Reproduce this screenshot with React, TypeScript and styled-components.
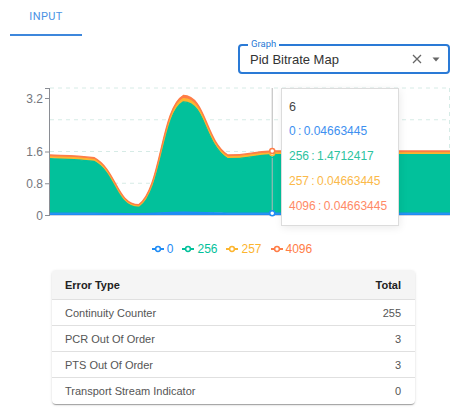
import styled, { createGlobalStyle } from 'styled-components';

const GlobalStyle = createGlobalStyle`
    body {
        margin: 0;
        background: #ffffff;
        font-family: "Liberation Sans", Arial, sans-serif;
    }
`;

type Series = { name: string; color: string; values: number[] };

const SERIES: Series[] = [
    { name: '0', color: '#1f8cf5', values: [0.047, 0.047, 0.03, 0.07, 0.047, 0.047, 0.047, 0.047, 0.047, 0.047] },
    { name: '256', color: '#02c19b', values: [1.37, 1.30, 0.17, 2.78, 1.37, 1.471, 1.47, 1.47, 1.47, 1.47] },
    { name: '257', color: '#fcb52f', values: [0.047, 0.047, 0.03, 0.08, 0.047, 0.047, 0.047, 0.047, 0.047, 0.047] },
    { name: '4096', color: '#ff7d47', values: [0.047, 0.047, 0.03, 0.08, 0.047, 0.047, 0.047, 0.047, 0.047, 0.047] },
];

const TOOLTIP = [
    { label: '0 : 0.04663445', color: '#3d8ff0' },
    { label: '256 : 1.4712417', color: '#2cc3a0' },
    { label: '257 : 0.04663445', color: '#fbb949' },
    { label: '4096 : 0.04663445', color: '#ff8a66' },
];

const ERRORS = [
    { type: 'Continuity Counter', total: 255 },
    { type: 'PCR Out Of Order', total: 3 },
    { type: 'PTS Out Of Order', total: 3 },
    { type: 'Transport Stream Indicator', total: 0 },
];

const X0 = 50;
const X1 = 450;
const BASE = 135;
const UNIT = 127 / 3.2;
const POINTER = 5;

const xAt = (i: number) => X0 + (i * (X1 - X0)) / 9;
const yAt = (v: number) => BASE - v * UNIT;

type Pt = [number, number];

const clamp = (v: number, a: number, b: number) => Math.min(Math.max(v, Math.min(a, b)), Math.max(a, b));

// echarts-like smoothed polyline, control points kept inside neighbour range
const smooth = (pts: Pt[], start: 'M' | 'L') => {
    const k = 0.25;
    const cps = pts.map((p, i) => {
        const prev = pts[i - 1] ?? p;
        const next = pts[i + 1] ?? p;
        const vx = next[0] - prev[0];
        const vy = next[1] - prev[1];
        const c0: Pt = [p[0] - vx * k, clamp(p[1] - vy * k, prev[1], p[1])];
        const c1: Pt = [p[0] + vx * k, clamp(p[1] + vy * k, p[1], next[1])];
        return [c0, c1];
    });
    let d = `${start}${pts[0][0].toFixed(2)},${pts[0][1].toFixed(2)}`;
    for (let i = 1; i < pts.length; i++) {
        const a = cps[i - 1][1];
        const b = cps[i][0];
        d += ` C${a[0].toFixed(2)},${a[1].toFixed(2)} ${b[0].toFixed(2)},${b[1].toFixed(2)} ${pts[i][0].toFixed(2)},${pts[i][1].toFixed(2)}`;
    }
    return d;
};

const stacks = (() => {
    const acc = new Array(10).fill(0);
    return SERIES.map((s) => {
        const bottom: Pt[] = acc.map((v, i) => [xAt(i), yAt(v)]);
        s.values.forEach((v, i) => (acc[i] += v));
        const top: Pt[] = acc.map((v, i) => [xAt(i), yAt(v)]);
        return { ...s, top, bottom };
    });
})();

const Page = styled.div`
    width: 462px;
    height: 417px;
    overflow: hidden;
    display: flex;
    flex-direction: column;
`;

const TabBar = styled.div`
    display: flex;
    height: 36px;
    padding-left: 10px;
`;

const Tab = styled.div<{ $active?: boolean }>`
    width: 72px;
    display: flex;
    align-items: center;
    justify-content: center;
    box-sizing: border-box;
    padding-bottom: 2px;
    font-family: Roboto, "Liberation Sans", sans-serif;
    font-size: 11px;
    letter-spacing: 0.4px;
    color: ${(p) => (p.$active ? '#4a92e4' : '#777')};
    border-bottom: 2px solid ${(p) => (p.$active ? '#3d87dc' : 'transparent')};
`;

const SelectRow = styled.div`
    display: flex;
    justify-content: flex-end;
    margin-top: 8px;
    padding-right: 12px;
`;

const SelectBox = styled.div`
    position: relative;
    width: 212px;
    height: 30px;
    box-sizing: border-box;
    border: 2px solid #2a7ad6;
    border-radius: 4px;
    display: flex;
    align-items: center;
    padding: 0 8px 0 10px;
    gap: 10px;
`;

const SelectLabel = styled.span`
    position: absolute;
    left: 8px;
    top: -8px;
    padding: 0 3px;
    background: #fff;
    font-family: Roboto, "Liberation Sans", sans-serif;
    font-size: 9.5px;
    line-height: 12px;
    color: #2a7ad6;
`;

const SelectValue = styled.span`
    flex: 1;
    font-size: 13px;
    color: #333;
    padding-top: 1px;
`;

const IconSlot = styled.span`
    display: flex;
    align-items: center;
`;

const ChartWrap = styled.div`
    position: relative;
    margin-top: 6px;
    height: 150px;
`;

const Tooltip = styled.div`
    position: absolute;
    left: 281px;
    top: 8px;
    width: 118px;
    height: 138px;
    box-sizing: border-box;
    background: #fff;
    border: 1px solid #dcdcdc;
    box-shadow: 1px 2px 8px rgba(0, 0, 0, 0.08);
    padding: 6px 0 0 7px;
    font-size: 12px;
`;

const TooltipTitle = styled.div`
    line-height: 24px;
    font-size: 12.5px;
    color: #464646;
`;

const TooltipLine = styled.div<{ $color: string }>`
    line-height: 25px;
    color: ${(p) => p.$color};
    white-space: nowrap;
    word-spacing: -1px;
`;

const Legend = styled.div`
    margin-top: 10px;
    height: 18px;
    display: flex;
    justify-content: center;
    align-items: center;
    gap: 9px;
    padding-left: 2px;
`;

const LegendItem = styled.div<{ $color: string }>`
    display: flex;
    align-items: center;
    gap: 3px;
    font-size: 12px;
    color: ${(p) => p.$color};
`;

const Card = styled.div`
    margin: 12px 0 0 52px;
    width: 363px;
    border-radius: 4px;
    overflow: hidden;
    box-shadow: 0 2px 1px -1px rgba(0, 0, 0, 0.2), 0 1px 1px 0 rgba(0, 0, 0, 0.14), 0 1px 3px 0 rgba(0, 0, 0, 0.12);
`;

const Table = styled.table`
    width: 100%;
    border-collapse: collapse;
    font-size: 11px;
`;

const HeadCell = styled.th<{ $right?: boolean }>`
    height: 29px;
    padding: 0 14px 0 13px;
    background: #f5f5f5;
    text-align: ${(p) => (p.$right ? 'right' : 'left')};
    font-weight: bold;
    color: #222;
    border-bottom: 1px solid #e0e0e0;
`;

const Cell = styled.td<{ $right?: boolean }>`
    height: 25px;
    padding: 0 14px 0 13px;
    text-align: ${(p) => (p.$right ? 'right' : 'left')};
    color: #555;
    border-bottom: 1px solid #e0e0e0;
    tr:last-child & {
        border-bottom: none;
        height: 26px;
    }
`;

const CloseIcon = () => (
    <svg width="10" height="10" viewBox="0 0 10 10">
        <path d="M1 1 L9 9 M9 1 L1 9" stroke="#666" strokeWidth="1.3" fill="none" />
    </svg>
);

const ArrowDown = () => (
    <svg width="8" height="5" viewBox="0 0 8 5">
        <path d="M0.5 0.5 L7.5 0.5 L4 4.5 Z" fill="#666" />
    </svg>
);

const LegendIcon = ({ color }: { color: string }) => (
    <svg width="12" height="8" viewBox="0 0 12 8">
        <line x1="0" y1="4" x2="12" y2="4" stroke={color} strokeWidth="2" />
        <circle cx="6" cy="4" r="2.4" fill="#fff" stroke={color} strokeWidth="1.5" />
    </svg>
);

const Chart = () => {
    const gridYs = [8, 39.75, 71.5, 103.25];
    const ticks = [
        { y: 8, label: '' },
        { y: 18, label: '3.2' },
        { y: 71.5, label: '1.6' },
        { y: 103.25, label: '0.8' },
        { y: 135, label: '0' },
    ];
    const px = xAt(POINTER);
    return (
        <svg width="462" height="150" style={{ display: 'block' }}>
            {gridYs.map((y) => (
                <line key={y} x1={X0} x2={X1} y1={y} y2={y} stroke="#d6ebe6" strokeDasharray="4 4" />
            ))}
            <line x1={X1 - 0.5} x2={X1 - 0.5} y1={8} y2={135} stroke="#d6ebe6" strokeDasharray="4 4" />
            {stacks.map((s) => (
                <path
                    key={s.name}
                    d={`${smooth(s.top, 'M')} ${smooth([...s.bottom].reverse(), 'L')} Z`}
                    fill={s.color}
                />
            ))}
            {stacks.map((s) => (
                <path key={s.name} d={smooth(s.top, 'M')} fill="none" stroke={s.color} strokeWidth="1.4" />
            ))}
            <line x1={X0} x2={X1} y1={135.5} y2={135.5} stroke="#cfd6e0" />
            <line x1={X0 - 0.5} x2={X0 - 0.5} y1={8} y2={136} stroke="#8a8d94" />
            {ticks.map((t) => (
                <g key={t.y}>
                    <line x1={X0 - 5} x2={X0} y1={t.y + 0.5} y2={t.y + 0.5} stroke="#8a8d94" />
                    {t.label && (
                        <text
                            x={43}
                            y={t.y + 4.5}
                            textAnchor="end"
                            fontSize="12"
                            fontFamily="'Liberation Sans', Arial, sans-serif"
                            fill="#74767d"
                        >
                            {t.label}
                        </text>
                    )}
                </g>
            ))}
            <line x1={px} x2={px} y1={8} y2={135} stroke="#b8b8b8" />
            {stacks.map((s) => (
                <circle
                    key={s.name}
                    cx={px}
                    cy={s.top[POINTER][1]}
                    r="2.5"
                    fill="#fff"
                    stroke={s.color}
                    strokeWidth="1.5"
                />
            ))}
        </svg>
    );
};

const App = () => {
    return (
        <Page>
            <GlobalStyle />
            <TabBar>
                <Tab $active>INPUT</Tab>
            </TabBar>

            <SelectRow>
                <SelectBox>
                    <SelectLabel>Graph</SelectLabel>
                    <SelectValue>Pid Bitrate Map</SelectValue>
                    <IconSlot><CloseIcon /></IconSlot>
                    <IconSlot><ArrowDown /></IconSlot>
                </SelectBox>
            </SelectRow>

            <ChartWrap>
                <Chart />
                <Tooltip>
                    <TooltipTitle>6</TooltipTitle>
                    {TOOLTIP.map((t) => (
                        <TooltipLine key={t.label} $color={t.color}>{t.label}</TooltipLine>
                    ))}
                </Tooltip>
            </ChartWrap>

            <Legend>
                {SERIES.map((s) => (
                    <LegendItem key={s.name} $color={s.color}>
                        <LegendIcon color={s.color} />
                        {s.name}
                    </LegendItem>
                ))}
            </Legend>

            <Card>
                <Table>
                    <thead>
                        <tr>
                            <HeadCell>Error Type</HeadCell>
                            <HeadCell $right>Total</HeadCell>
                        </tr>
                    </thead>
                    <tbody>
                        {ERRORS.map((e) => (
                            <tr key={e.type}>
                                <Cell>{e.type}</Cell>
                                <Cell $right>{e.total}</Cell>
                            </tr>
                        ))}
                    </tbody>
                </Table>
            </Card>
        </Page>
    );
};

export default App;
